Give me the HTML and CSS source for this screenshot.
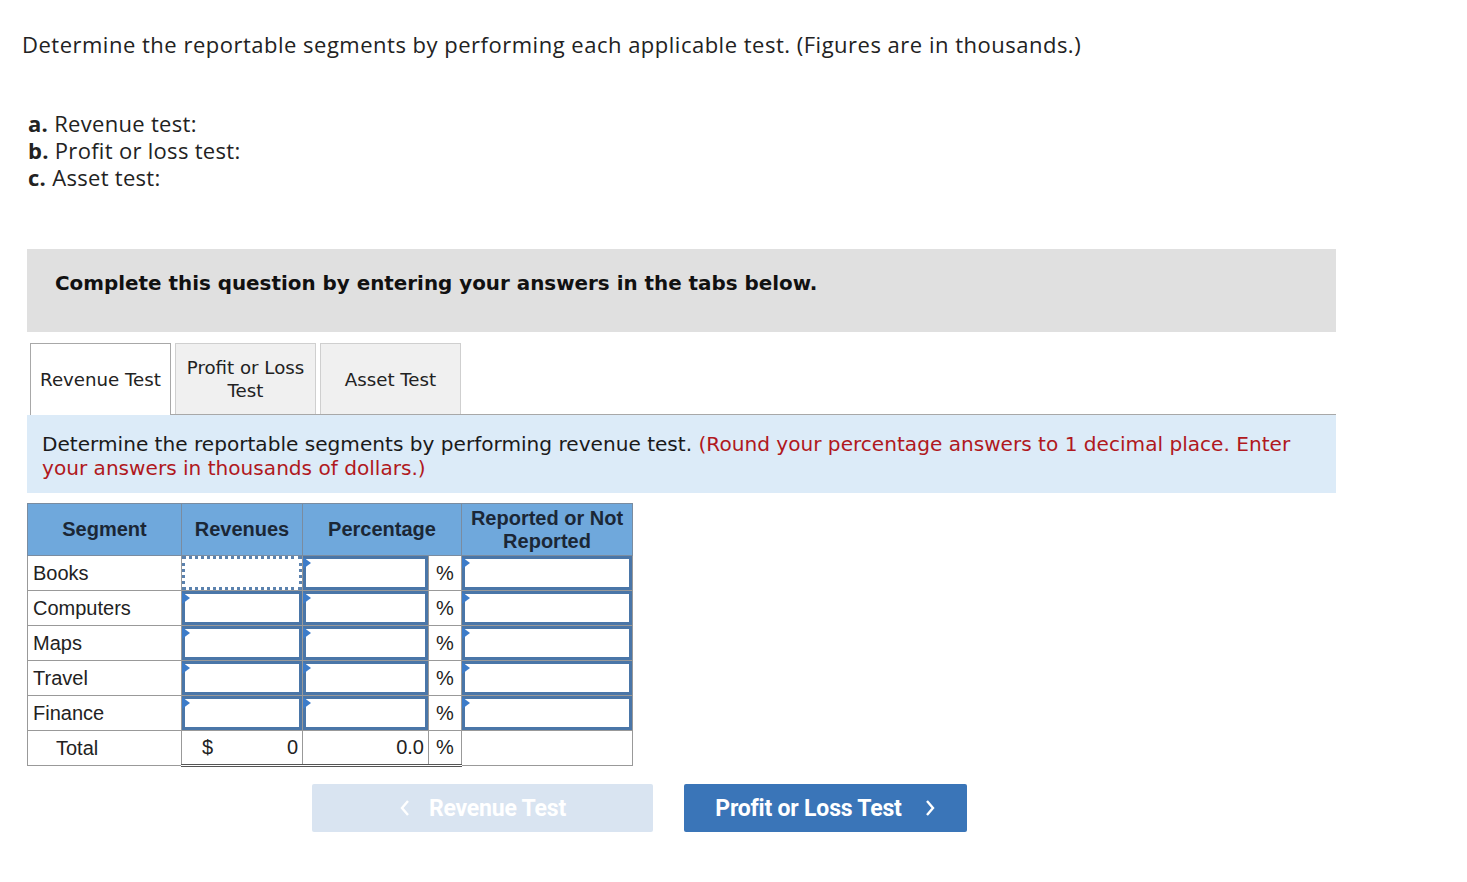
FILE: index.html
```html
<!DOCTYPE html>
<html>
<head>
<meta charset="utf-8">
<link rel="stylesheet" href="styles.css">
</head>
<body>
<div class="page">
  <p class="title">Determine the reportable segments by performing each applicable test. (Figures are in thousands.)</p>
  <ul class="parts">
    <li><b>a.</b> Revenue test:</li>
    <li><b>b.</b> Profit or loss test:</li>
    <li><b>c.</b> Asset test:</li>
  </ul>
  <div class="banner">Complete this question by entering your answers in the tabs below.</div>
  <div class="tabs">
    <div class="tab active">Revenue Test</div>
    <div class="tab">Profit or Loss<br>Test</div>
    <div class="tab">Asset Test</div>
  </div>
  <div class="info">Determine the reportable segments by performing revenue test. <span class="red">(Round your percentage answers to 1 decimal place. Enter</span> <span class="red">your answers in thousands of dollars.)</span></div>
  <table class="grid">
    <colgroup>
      <col class="c1"><col class="c2"><col class="c3"><col class="c4"><col class="c5">
    </colgroup>
    <thead>
      <tr>
        <th>Segment</th>
        <th>Revenues</th>
        <th colspan="2">Percentage</th>
        <th class="two">Reported or Not<br>Reported</th>
      </tr>
    </thead>
    <tbody>
      <tr>
        <td class="lbl">Books</td>
        <td class="in"><div class="box focus"></div></td>
        <td class="in"><div class="box"><i class="flag"></i></div></td>
        <td class="pct">%</td>
        <td class="in"><div class="box"><i class="flag"></i></div></td>
      </tr>
      <tr>
        <td class="lbl">Computers</td>
        <td class="in"><div class="box"><i class="flag"></i></div></td>
        <td class="in"><div class="box"><i class="flag"></i></div></td>
        <td class="pct">%</td>
        <td class="in"><div class="box"><i class="flag"></i></div></td>
      </tr>
      <tr>
        <td class="lbl">Maps</td>
        <td class="in"><div class="box"><i class="flag"></i></div></td>
        <td class="in"><div class="box"><i class="flag"></i></div></td>
        <td class="pct">%</td>
        <td class="in"><div class="box"><i class="flag"></i></div></td>
      </tr>
      <tr>
        <td class="lbl">Travel</td>
        <td class="in"><div class="box"><i class="flag"></i></div></td>
        <td class="in"><div class="box"><i class="flag"></i></div></td>
        <td class="pct">%</td>
        <td class="in"><div class="box"><i class="flag"></i></div></td>
      </tr>
      <tr>
        <td class="lbl">Finance</td>
        <td class="in"><div class="box"><i class="flag"></i></div></td>
        <td class="in"><div class="box"><i class="flag"></i></div></td>
        <td class="pct">%</td>
        <td class="in"><div class="box"><i class="flag"></i></div></td>
      </tr>
      <tr class="total">
        <td class="lbl indent">Total</td>
        <td class="sum money"><span class="dollar">$</span>0</td>
        <td class="sum num">0.0</td>
        <td class="pct sum">%</td>
        <td></td>
      </tr>
    </tbody>
  </table>
  <div class="nav">
    <button class="btn prev"><svg class="chev" width="12" height="18" viewBox="0 0 12 18"><path d="M9 2 L3 9 L9 16" fill="none" stroke="#fff" stroke-width="2.4"/></svg>Revenue Test</button>
    <button class="btn next">Profit or Loss Test<svg class="chev" width="12" height="18" viewBox="0 0 12 18"><path d="M3 2 L9 9 L3 16" fill="none" stroke="#fff" stroke-width="2.4"/></svg></button>
  </div>
</div>
</body>
</html>
```

FILE: styles.css
```css
* { box-sizing: border-box; }
body {
  margin: 0;
  background: #fff;
  color: #222;
}
.page {
  padding: 27px 0 0 0;
}
.title {
  margin: 0 0 0 22px;
  font-family: "Open Sans", "Lato", sans-serif;
  font-size: 22px;
  letter-spacing: 0.5px;
  line-height: 34px;
  color: #222;
}
.parts {
  list-style: none;
  margin: 49px 0 0 28px;
  padding: 0;
  font-family: "Open Sans", "Lato", sans-serif;
  font-size: 22px;
  letter-spacing: 0.3px;
  line-height: 27px;
  color: #222;
}
.parts b { font-weight: 700; }
.banner {
  margin: 58px 0 0 27px;
  width: 1309px;
  height: 83px;
  background: #e0e0e0;
  padding: 22px 0 0 28px;
  font-family: "DejaVu Sans", Verdana, sans-serif;
  font-weight: 700;
  font-size: 19.9px;
  line-height: 26px;
  color: #111;
}
.tabs {
  display: flex;
  gap: 4px;
  margin: 11px 0 0 30px;
  width: 1306px;
  border-bottom: 1px solid #a8a8a8;
  height: 72px;
}
.tab {
  width: 141px;
  height: 71px;
  display: flex;
  align-items: center;
  justify-content: center;
  text-align: center;
  font-family: "DejaVu Sans", Verdana, sans-serif;
  font-size: 18.2px;
  line-height: 23px;
  color: #222;
  background: #f0f0f0;
  border: 1px solid #cfcfcf;
  border-bottom: none;
}
.tab.active {
  background: #fff;
  border-color: #a8a8a8;
  height: 72px;
}
.info {
  margin-left: 27px;
  width: 1309px;
  background: #dcebf8;
  padding: 17px 15px 13px 15px;
  font-family: "DejaVu Sans", Verdana, sans-serif;
  font-size: 20.1px;
  line-height: 24px;
  color: #1a1a1a;
}
.red { color: #b01820; }
.grid {
  margin: 10px 0 0 27px;
  border-collapse: collapse;
  table-layout: fixed;
  width: 605px;
  font-family: "Liberation Sans", Arial, sans-serif;
  font-size: 20px;
  color: #222;
}
.c1 { width: 154px; }
.c2 { width: 121px; }
.c3 { width: 126px; }
.c4 { width: 33px; }
.c5 { width: 171px; }
.grid th {
  background: #6fa8dc;
  color: #1b2736;
  font-weight: 700;
  font-size: 20px;
  height: 52px;
  border: 1px solid #7a8ca0;
  padding: 0;
  line-height: 23px;
}
.grid td {
  border: 1px solid #999;
  height: 35px;
  padding: 0;
}
.grid td.lbl {
  padding-left: 5px;
}
.grid td.lbl.indent {
  padding-left: 28px;
}
.grid td.pct {
  text-align: center;
}
.box {
  position: relative;
  width: 100%;
  height: 34px;
  border: 3px solid #4a76a8;
  background: #fff;
}
.box.focus {
  border: 3px dotted #5b82ae;
}
.flag {
  position: absolute;
  left: -3px;
  top: -2px;
  width: 0;
  height: 0;
  border-top: 6px solid transparent;
  border-bottom: 6px solid transparent;
  border-left: 8px solid #3d7cc9;
}
.total td.sum {
  border-bottom: 3px double #555;
}
.total td.money {
  text-align: right;
  padding: 0 4px 0 20px;
}
.dollar {
  float: left;
}
.total td.num {
  text-align: right;
  padding-right: 4px;
}
.nav {
  display: flex;
  gap: 31px;
  margin: 17px 0 0 312px;
}
.btn {
  height: 48px;
  border: none;
  border-radius: 2px;
  font-family: "Roboto", "Liberation Sans", sans-serif;
  font-weight: 700;
  font-size: 23px;
  letter-spacing: -0.2px;
  color: #fff;
  display: flex;
  align-items: center;
  justify-content: center;
  padding: 0;
}
.prev {
  width: 341px;
  background: #d9e4f1;
}
.next {
  width: 283px;
  background: #3a75b8;
}
.prev .chev { margin-right: 18px; }
.next .chev { margin-left: 22px; }
```
